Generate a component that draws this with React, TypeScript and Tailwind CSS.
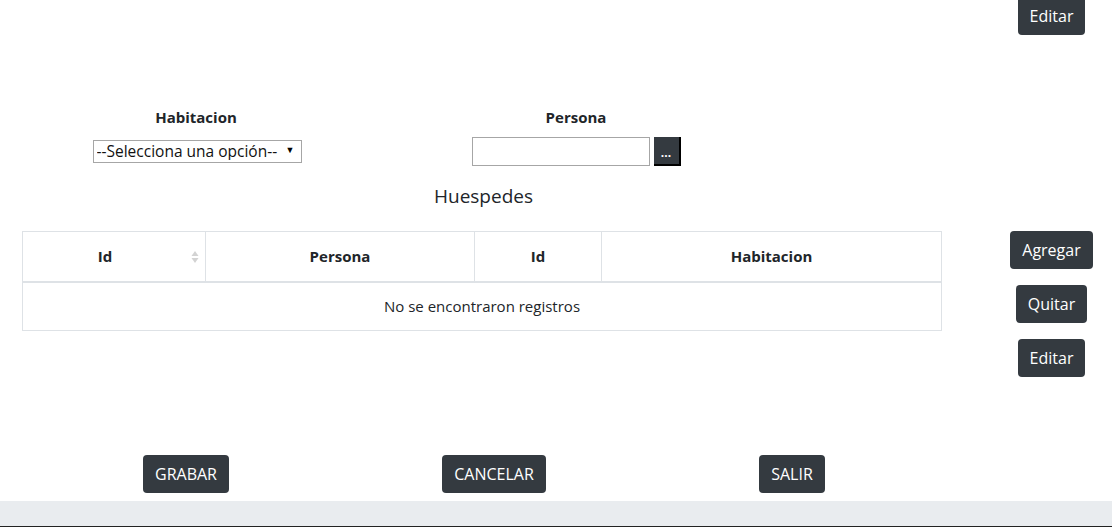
import React from "react";

const btn =
  "h-[38px] rounded-[4px] bg-[#343a40] text-white text-[16px] flex items-center justify-center leading-none";

function SortIcon() {
  return (
    <svg width="8" height="14" viewBox="0 0 8 14" className="absolute right-[6px] top-[18px]">
      <path d="M4 1 L7.5 6 L0.5 6 Z" fill="#d3d3d3" />
      <path d="M4 13 L7.5 8 L0.5 8 Z" fill="#d3d3d3" />
    </svg>
  );
}

export default function App() {
  return (
    <div
      className="w-[1112px] h-[527px] bg-white text-[#212529] overflow-hidden flex flex-col"
      style={{ fontFamily: '"Open Sans", "Noto Sans", sans-serif' }}
    >
      {/* top bar */}
      <div className="h-[35px] flex justify-end pr-[27px] shrink-0">
        <button className={`${btn} w-[67px] -mt-[3px]`}>Editar</button>
      </div>

      {/* form row */}
      <div className="flex mt-[70px] shrink-0">
        <div className="w-[348px] ml-[22px] flex flex-col items-center">
          <div className="h-[24px] leading-[24px] font-bold text-[15px]">Habitacion</div>
          <div className="mt-[8px] h-[29px] flex items-start pt-[2px]">
            <div className="relative w-[209px] h-[23px] ml-[2px]">
              <select className="appearance-none w-full h-full border border-[#a6a6a6] bg-white pl-[3px] text-[15.5px] leading-none text-[#111] outline-none">
                <option>--Selecciona una opción--</option>
              </select>
              <span className="absolute right-[7px] top-[4px] text-[9px] text-black pointer-events-none">▼</span>
            </div>
          </div>
        </div>
        <div className="w-[412px] flex flex-col items-center">
          <div className="h-[24px] leading-[24px] font-bold text-[15px]">Persona</div>
          <div className="mt-[8px] h-[29px] flex items-center gap-[4px]">
            <input className="w-[178px] h-[29px] border border-[#a6a6a6] outline-none px-1" />
            <button className="w-[27px] h-[29px] bg-[#343a40] border-r-2 border-b-2 border-black text-white text-[12px] font-bold flex items-center justify-center leading-none pt-[4px]">
              ...
            </button>
          </div>
        </div>
      </div>

      {/* main */}
      <div className="flex mt-[15px] shrink-0">
        <div className="w-[991px] pl-[22px]">
          <div className="w-[920px]">
            <div className="h-[30px] leading-[30px] text-center text-[19px] text-[#212529] pl-[3px]">Huespedes</div>
            <table className="mt-[20px] w-[920px] border border-[#dee2e6] border-collapse text-[15px]">
              <thead>
                <tr className="h-[50px]">
                  <th className="relative w-[183px] border border-[#dee2e6] border-b-2 font-bold text-center pr-[18px]">
                    Id
                    <SortIcon />
                  </th>
                  <th className="w-[269px] border border-[#dee2e6] border-b-2 font-bold text-center">Persona</th>
                  <th className="w-[127px] border border-[#dee2e6] border-b-2 font-bold text-center">Id</th>
                  <th className="border border-[#dee2e6] border-b-2 font-bold text-center">Habitacion</th>
                </tr>
              </thead>
              <tbody>
                <tr className="h-[49px]">
                  <td colSpan={4} className="text-center border border-[#dee2e6]">
                    No se encontraron registros
                  </td>
                </tr>
              </tbody>
            </table>
          </div>
        </div>
        <div className="w-[121px] pt-[50px] flex flex-col items-center gap-[16px]">
          <button className={`${btn} w-[83px]`}>Agregar</button>
          <button className={`${btn} w-[71px]`}>Quitar</button>
          <button className={`${btn} w-[67px]`}>Editar</button>
        </div>
      </div>

      {/* bottom buttons */}
      <div className="flex mt-[78px] shrink-0">
        <div className="w-[372px] flex justify-center">
          <button className={`${btn} w-[86px]`}>GRABAR</button>
        </div>
        <div className="w-[244px] flex justify-center">
          <button className={`${btn} w-[104px]`}>CANCELAR</button>
        </div>
        <div className="w-[352px] flex justify-center">
          <button className={`${btn} w-[66px]`}>SALIR</button>
        </div>
      </div>

      <div className="mt-auto h-[26px] bg-[#e9ecef] border-b border-[#222] shrink-0" />
    </div>
  );
}
